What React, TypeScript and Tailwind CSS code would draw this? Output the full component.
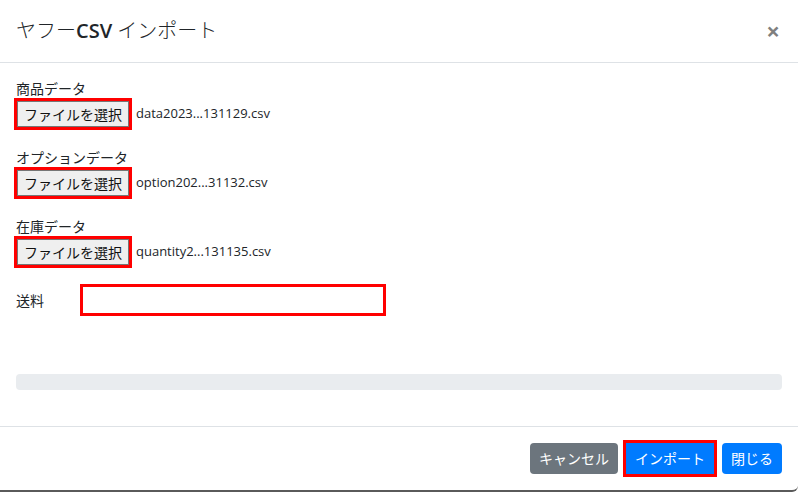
import React from "react";

const files = [
  { label: "商品データ", name: "data2023...131129.csv" },
  { label: "オプションデータ", name: "option202...31132.csv" },
  { label: "在庫データ", name: "quantity2...131135.csv" },
];

function FileField({ label, name }: { label: string; name: string }) {
  return (
    <div className="mb-[18px]">
      <div className="h-[19px] text-[14px] leading-[19px] text-[#212529]">{label}</div>
      <div className="flex h-[32px] items-center">
        <div className="ml-[1px] flex h-[26px] items-center border border-[#767676] bg-[#efefef] px-[6px] text-[14px] text-[#111] outline-[3px] outline-solid outline-[#ff0000]">
          ファイルを選択
        </div>
        <span className="ml-[7px] text-[13px] text-[#212529]">{name}</span>
      </div>
    </div>
  );
}

export default function App() {
  return (
    <div
      className="flex h-[492px] w-[798px] flex-col overflow-hidden rounded-br-[6px] border-b-2 border-[#5a5a5a] bg-white text-[#212529]"
      style={{ fontFamily: '"Open Sans", "Noto Sans CJK JP", sans-serif' }}
    >
      <div className="flex h-[63px] items-center justify-between border-b border-[#dee2e6] px-4">
        <h5 className="text-[20px] leading-[30px] font-light">
          ヤフー<span className="font-semibold">CSV</span> インポート
        </h5>
        <span className="mr-[2px] text-[24px] leading-none font-bold text-black/50">×</span>
      </div>
      <div className="flex-1 px-4 pt-4">
        {files.map((f) => (
          <FileField key={f.label} label={f.label} name={f.name} />
        ))}
        <div className="-mt-[2px] flex h-[32px] items-center">
          <span className="w-[67px] text-[14px]">送料</span>
          <div className="h-[26px] w-[300px] bg-white outline-[3px] outline-solid outline-[#ff0000]" />
        </div>
        <div className="mt-[58px] h-[16px] rounded-[4px] bg-[#e9ecef]" />
      </div>
      <div className="flex h-[64px] items-center justify-end gap-2 border-t border-[#dee2e6] px-4 pb-[1px]">
        <button className="h-[31px] rounded-[4px] bg-[#6c757d] px-[9px] text-[14px] text-white">
          キャンセル
        </button>
        <button className="h-[31px] w-[88px] bg-[#007bff] px-[9px] text-[14px] text-white outline-[3px] outline-solid outline-[#ff0000]">
          インポート
        </button>
        <button className="h-[31px] rounded-[4px] bg-[#007bff] px-[9px] text-[14px] text-white">
          閉じる
        </button>
      </div>
    </div>
  );
}
